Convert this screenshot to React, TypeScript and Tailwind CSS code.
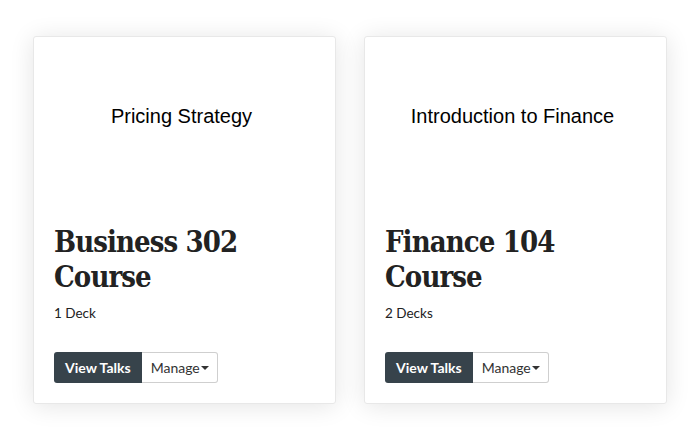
import { useState } from 'react';

const courses = [
    { key: 'bus-302', preview: 'Pricing Strategy', title: 'Business 302 Course', decks: '1 Deck' },
    { key: 'fin-104', preview: 'Introduction to Finance', title: 'Finance 104 Course', decks: '2 Decks' },
];

function CourseCard({ c }: { c: (typeof courses)[number] }) {
    const [open, setOpen] = useState(false);

    return (
        <div className="w-[303px] h-[368px] bg-white rounded-[3px] border border-[#e8e8e8] shadow-[0_2px_24px_rgba(0,0,0,0.11)] flex flex-col">
            <div className="h-[158px] flex items-center justify-center pr-[6px]">
                <span className="text-[20px] text-black font-['Liberation_Sans',Arial,sans-serif]">{c.preview}</span>
            </div>
            <div className="px-[20px] pt-[30px]">
                <h2 className="text-[29px] leading-[35px] font-bold text-[#222] font-['DejaVu_Serif_Condensed','DejaVu_Serif',serif] tracking-[-0.9px] w-[220px]">
                    {c.title}
                </h2>
                <p className="mt-[8px] text-[13.5px] leading-[20px] text-[#222] font-['Lato',sans-serif]">{c.decks}</p>
                <div className="mt-[29px] flex font-['Lato',sans-serif] text-[14px]">
                    <button className="h-[31px] px-[11px] bg-[#37434b] text-white font-bold rounded-l-[3px]">View Talks</button>
                    <button
                        onClick={() => setOpen(!open)}
                        className="h-[31px] pl-[9px] pr-[8px] border border-[#cfcfcf] border-l-0 rounded-r-[3px] text-[#333] flex items-center"
                    >
                        Manage
                        <span className="ml-[1px] border-x-[4px] border-x-transparent border-t-[4px] border-t-[#333]" />
                    </button>
                </div>
            </div>
        </div>
    );
}

export default function App() {
    return (
        <div className="w-[700px] h-[441px] bg-white pt-[36px] pl-[33px] flex gap-[28px]">
            {courses.map((c) => (
                <CourseCard key={c.key} c={c} />
            ))}
        </div>
    );
}
